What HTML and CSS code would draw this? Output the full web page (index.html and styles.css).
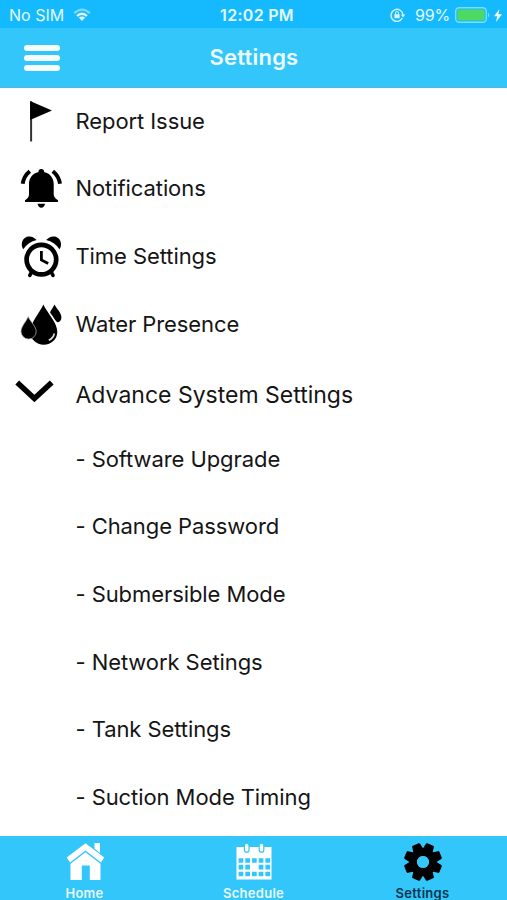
FILE: index.html
```
<!DOCTYPE html>
<html lang="en">
<head>
    <meta charset="UTF-8">
    <title>Settings</title>
    <link rel="stylesheet" href="styles.css">
</head>
<body>
<div class="status">
    <div class="status-left">
        <span class="carrier">No SIM</span>
        <svg width="18" height="14" viewBox="0 0 18 14" fill="none" stroke="#e4f8ff" stroke-width="2.3">
            <path d="M1.2 5.2Q9-2 16.8 5.2" opacity=".5"/>
            <path d="M4 8Q9 3.6 14 8"/>
            <path d="M5.8 9.6Q9 7.2 12.2 9.6L9 13z" fill="#e4f8ff" stroke="none"/>
        </svg>
    </div>
    <span class="clock">12:02 PM</span>
    <div class="status-right">
        <svg width="16" height="14" viewBox="0 0 16 14" fill="none" stroke="#d8f5ff" stroke-width="1.4">
            <path d="M12.3 10.2A6 6 0 1 1 13 7"/>
            <path d="M10.8 6.5h4.6L13 9.4z" fill="#d8f5ff" stroke="none"/>
            <rect x="4.4" y="6.2" width="5.2" height="4" fill="#d8f5ff" stroke="none"/>
            <path d="M5.5 6.5V5a1.5 1.5 0 0 1 3 0v1.5" stroke-width="1"/>
        </svg>
        <span class="percent">99%</span>
        <svg class="battery" width="36" height="16" viewBox="0 0 36 16">
            <rect x=".7" y=".7" width="30.6" height="14.6" rx="3.5" fill="none" stroke="#7fdcff" stroke-width="1.4"/>
            <rect x="2.4" y="2.4" width="27.2" height="11.2" rx="1.5" fill="#4cd964"/>
            <path d="M33 5.5q2.4 2.5 0 5z" fill="#7fdcff"/>
        </svg>
        <svg width="8" height="13" viewBox="0 0 8 13">
            <path d="M5.5 0L0 7.2h3.2L2 13l6-7.7H4.5z" fill="#f2fcff"/>
        </svg>
    </div>
</div>
<div class="header">
    <div class="menu">
        <span></span>
        <span></span>
        <span></span>
    </div>
    <h1>Settings</h1>
</div>

<ul class="list">
    <li>
        <svg class="icon" viewBox="0 0 42 42">
            <path d="M11.1 .5v40" stroke="#333" stroke-width="2"/>
            <path d="M10.1 0L32 9.4 11.2 18.4H10.1z"/>
        </svg>
        <span>Report Issue</span>
    </li>
    <li>
        <svg class="icon" viewBox="0 0 42 42">
            <path d="M21.3 1a2.8 2.8 0 0 1 2.8 2.9C30 5.2 33.7 9.8 33.7 16v10c0 2.5 1 4 4.3 6.3V34H5v-1.7C8.3 30 9 28.5 9 26V16C9 9.8 12.6 5.2 18.5 3.9A2.8 2.8 0 0 1 21.3 1z"/>
            <path d="M17.5 35.8h7.6c-.7 2.5-2 3.9-3.8 3.9s-3.1-1.4-3.8-3.9z"/>
            <path d="M9.8 3.2Q3.8 8 2.7 15.8M32.8 3.2Q38.9 8 40 15.8" fill="none" stroke="#000" stroke-width="3.9"/>
        </svg>
        <span>Notifications</span>
    </li>
    <li>
        <svg class="icon" viewBox="0 0 42 42">
            <path d="M3.2 13.3C.5 9 1.5 2.5 7 .7c4-1 7.2.5 9.7 3.4C11 5.5 6.5 8.5 3.2 13.3z"/>
            <path d="M39.6 13.3C42.3 9 41.3 2.5 35.8.7c-4-1-7.2.5-9.7 3.4C31.8 5.5 36.3 8.5 39.6 13.3z"/>
            <circle cx="21.4" cy="23.6" r="14.8" fill="none" stroke="#000" stroke-width="4.7"/>
            <path d="M11.5 36L9.8 39.4M31.2 36l1.8 3.4" stroke="#000" stroke-width="3.6" stroke-linecap="round"/>
            <path d="M21.4 15v9l6.8 3.6" fill="none" stroke="#000" stroke-width="2.8"/>
        </svg>
        <span>Time Settings</span>
    </li>
    <li>
        <svg class="icon" viewBox="0 0 42 42">
            <path d="M34.5.6C37.5 6 41.4 9 41.4 13.5c0 3-1.8 4.8-4.2 4.8C34.5 16 33 12 30 8.5 31 6 33 4 34.5.6z"/>
            <path d="M23.4.4C26.5 8 37.3 18 37.3 27.8c0 7.5-6 13-13.5 13s-13.5-5.5-13.5-13C10.3 18 20.3 8 23.4.4z"/>
            <path d="M8.2 12.6C10.5 18 16.2 22.5 16.2 27.5a7.6 7.6 0 0 1-15.2 0C1 22.5 6 18 8.2 12.6z" stroke="#bbb" stroke-width=".7"/>
            <path d="M34.3 29.5Q33.5 34 28.8 36.3" fill="none" stroke="#ddd" stroke-width="1.6"/>
        </svg>
        <span>Water Presence</span>
    </li>
    <li class="open">
        <svg class="icon" viewBox="0 0 42 42">
            <path d="M2.2 11.5L19.4 27.5 36.7 11.5" fill="none" stroke="#000" stroke-width="5.5"/>
        </svg>
        <span>Advance System Settings</span>
    </li>
    <li class="sub"><span>- Software Upgrade</span></li>
    <li class="sub"><span>- Change Password</span></li>
    <li class="sub"><span>- Submersible Mode</span></li>
    <li class="sub"><span>- Network Setings</span></li>
    <li class="sub"><span>- Tank Settings</span></li>
    <li class="sub"><span>- Suction Mode Timing</span></li>
</ul>

<div class="tabs">
    <div class="tab">
        <svg width="40" height="40" viewBox="0 0 40 40" fill="#fff">
            <path d="M29.5 1H35v10l-5.5-4.5z"/>
            <path d="M20.5 1.3L39.3 15.5 36 20.5 20.5 8.5 5 20.5 1.7 15.5z"/>
            <path d="M20.5 10.2l15 11.5V38H24.8V23.5h-8V38H5.5V21.7z"/>
        </svg>
        <span>Home</span>
    </div>
    <div class="tab">
        <svg width="40" height="40" viewBox="0 0 40 40">
            <path d="M2.5 5h35v32.5h-35z" fill="#fff"/>
            <g fill="#fff" stroke="#33c6fb" stroke-width="1.2">
                <rect x="10.4" y="1.2" width="4.6" height="9" rx="2.3"/>
                <rect x="25.2" y="1.2" width="4.6" height="9" rx="2.3"/>
            </g>
            <path d="M4.6 18.5h31.5M4.6 25.2H16.5M24.7 25.2h11.4M4.6 32h31.5" fill="none" stroke="#33c6fb" stroke-width="4.7" stroke-dasharray="4.7 2"/>
        </svg>
        <span>Schedule</span>
    </div>
    <div class="tab active">
        <svg width="40" height="40" viewBox="-20 -20 40 40">
            <g id="teeth">
                <path id="tooth" d="M-5.5-11L-4.3-18q.2-1 1.2-1h6.2q1 0 1.2 1L5.5-11z" transform="rotate(22.5)"/>
                <use href="#tooth" transform="rotate(45)"/>
                <use href="#tooth" transform="rotate(90)"/>
                <use href="#tooth" transform="rotate(135)"/>
            </g>
            <use href="#teeth" transform="rotate(180)"/>
            <circle r="9.9" fill="none" stroke="#000" stroke-width="7.8"/>
            <circle r="6" fill="#33c6fb"/>
        </svg>
        <span>Settings</span>
    </div>
</div>
</body>
</html>
```
FILE: styles.css
```
* {
    margin: 0;
    padding: 0;
    box-sizing: border-box;
}

body {
    height: 900px;
    display: flex;
    flex-direction: column;
    overflow: hidden;
    background-color: #fff;
    font-family: Inter, "Liberation Sans", sans-serif;
    color: #151515;
}

svg {
    display: block;
    flex: none;
}

.status {
    height: 28px;
    flex: none;
    display: grid;
    grid-template-columns: 1fr auto 1fr;
    align-items: center;
    padding: 2px 5px 0 9px;
    background-color: #14bafd;
    color: #e4f8ff;
    font-size: 16px;
    line-height: 20px;
}

.status-left,
.status-right {
    display: flex;
    align-items: center;
}

.status-left {
    gap: 9px;
}

.status-right {
    justify-content: flex-end;
}

.clock {
    margin-left: 3px;
    font-weight: 600;
    letter-spacing: 0.3px;
}

.percent {
    margin: 0 5px 0 9px;
    letter-spacing: -0.2px;
}

.battery {
    margin-right: 3px;
}

.header {
    height: 60px;
    flex: none;
    display: grid;
    grid-template-columns: 1fr auto 1fr;
    align-items: center;
    background-color: #33c6fb;
    border-bottom: 1px solid #55b5dc;
}

.menu {
    width: 36px;
    margin-left: 24px;
    display: flex;
    flex-direction: column;
    gap: 4px;
}

.menu span {
    height: 6px;
    border-radius: 3px;
    background-color: #f5fdff;
}

h1 {
    padding: 0 0 1px 1px;
    font-size: 22px;
    font-weight: 600;
    color: #edfbff;
    letter-spacing: 0.2px;
}

.list {
    flex: 1;
    list-style: none;
    font-size: 22px;
    letter-spacing: -0.08px;
}

.list li {
    height: 67.6px;
    display: flex;
    align-items: center;
    white-space: nowrap;
}

.list span {
    padding-bottom: 2px;
}

.icon {
    width: 42px;
    height: 42px;
    margin: 0 13.5px 0 20px;
}

.list .open {
    font-size: 23px;
    letter-spacing: 0;
}

.list .open .icon {
    margin: 0 18.5px 0 15px;
}

.list .open span {
    padding: 5px 0 0;
}

.list .sub {
    padding-left: 75.5px;
}

.tabs {
    height: 64px;
    flex: none;
    display: grid;
    grid-template-columns: repeat(3, 1fr);
    background-color: #33c6fb;
}

.tab {
    display: flex;
    flex-direction: column;
    align-items: center;
    padding-top: 6px;
    font-size: 13px;
    font-weight: 600;
    line-height: 16px;
    letter-spacing: 0.3px;
    color: #e6f9ff;
}

.tab span {
    margin-top: 3px;
}

.active {
    color: #06354a;
}
```
